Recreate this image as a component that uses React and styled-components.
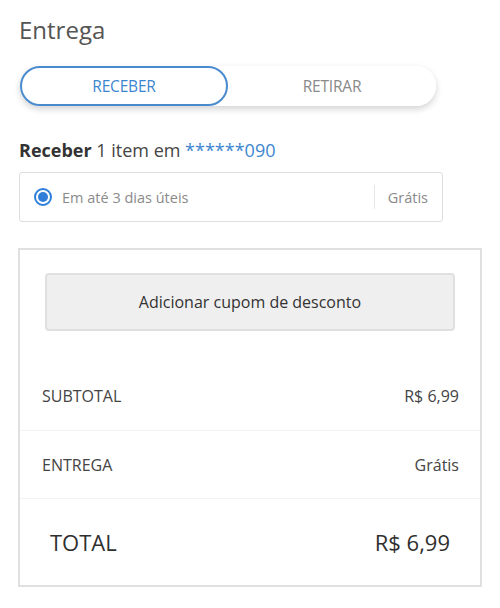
import styled, { createGlobalStyle } from "styled-components";

const GlobalStyle = createGlobalStyle`
  * {
    box-sizing: border-box;
  }

  body {
    margin: 0;
    background: #ffffff;
    font-family: "Open Sans", "Noto Sans", sans-serif;
  }
`;

const Page = styled.div`
  width: 500px;
  padding: 14px 18px 20px 19px;
`;

const Title = styled.h1`
  margin: 0;
  font-size: 24px;
  line-height: 32px;
  font-weight: 400;
  color: #555555;
`;

const Toggle = styled.div`
  display: flex;
  width: 416px;
  height: 40px;
  margin: 20px 0 0 1px;
  border-radius: 20px;
  background: #ffffff;
  box-shadow: 0 3px 7px rgba(0, 0, 0, 0.18);
`;

const ToggleBtn = styled.button`
  flex: 1;
  height: 40px;
  border-radius: 20px;
  border: 2px solid ${(p) => (p.$active ? "#4a8bcf" : "transparent")};
  background: #ffffff;
  color: ${(p) => (p.$active ? "#3d86cf" : "#8a8a8a")};
  font-family: inherit;
  font-size: 15.5px;
  letter-spacing: -0.2px;
  padding: 0;
  cursor: pointer;
`;

const Summary = styled.p`
  margin: 32px 0 0;
  font-size: 18px;
  line-height: 24px;
  color: #444444;

  strong {
    font-weight: 700;
    color: #333333;
  }
`;

const Phone = styled.span`
  color: #3d86cf;
`;

const Option = styled.label`
  display: flex;
  align-items: center;
  width: 424px;
  height: 50px;
  margin-top: 10px;
  padding: 0 14px 0 14px;
  border: 1px solid #dddddd;
  border-radius: 3px;
  font-size: 14.5px;
  color: #8a8a8a;
`;

const Radio = styled.span`
  display: flex;
  align-items: center;
  justify-content: center;
  width: 18px;
  height: 18px;
  margin-right: 10px;
  border: 2px solid #2f7fd8;
  border-radius: 50%;

  &::after {
    content: "";
    width: 10px;
    height: 10px;
    border-radius: 50%;
    background: #2f7fd8;
  }
`;

const OptionText = styled.span`
  flex: 1;
`;

const OptionPrice = styled.span`
  display: flex;
  align-items: center;
  height: 24px;
  padding-left: 13px;
  border-left: 1px solid #e6e6e6;
`;

const Box = styled.div`
  width: 464px;
  margin: 26px 0 0 -1px;
  border: 2px solid #e0e0e0;
`;

const Coupon = styled.button`
  display: block;
  width: 410px;
  height: 58px;
  margin: 23px auto 31px;
  border: 2px solid #e0e0e0;
  border-radius: 4px;
  background: #efefef;
  font-family: inherit;
  font-size: 16px;
  color: #333333;
  cursor: pointer;
`;

const Row = styled.div`
  display: flex;
  align-items: center;
  justify-content: space-between;
  height: ${(p) => (p.$total ? "87px" : "68px")};
  padding: ${(p) => (p.$total ? "0 30px 0 30px" : "0 21px 0 22px")};
  font-size: ${(p) => (p.$total ? "22px" : "16px")};
  color: ${(p) => (p.$total ? "#2f2f2f" : "#444444")};

  & + & {
    border-top: 1px solid #f3f3f3;
  }
`;

export default function App() {
  return (
    <>
      <GlobalStyle />
      <Page>
        <Title>Entrega</Title>

        <Toggle>
          <ToggleBtn $active>RECEBER</ToggleBtn>
          <ToggleBtn>RETIRAR</ToggleBtn>
        </Toggle>

        <Summary>
          <strong>Receber</strong> 1 item em <Phone>******090</Phone>
        </Summary>

        <Option>
          <Radio />
          <OptionText>Em até 3 dias úteis</OptionText>
          <OptionPrice>Grátis</OptionPrice>
        </Option>

        <Box>
          <Coupon>Adicionar cupom de desconto</Coupon>
          <Row>
            <span>SUBTOTAL</span>
            <span>R$ 6,99</span>
          </Row>
          <Row>
            <span>ENTREGA</span>
            <span>Grátis</span>
          </Row>
          <Row $total>
            <span>TOTAL</span>
            <span>R$ 6,99</span>
          </Row>
        </Box>
      </Page>
    </>
  );
}
